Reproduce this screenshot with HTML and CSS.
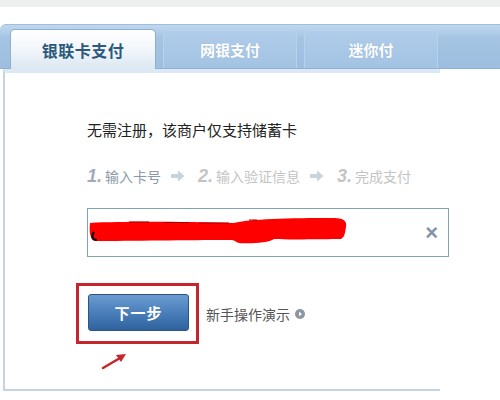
FILE: index.html
```html
<!DOCTYPE html>
<html lang="zh-CN">
<head>
<meta charset="utf-8">
<link rel="stylesheet" href="styles.css">
</head>
<body>
<div class="top-strip"></div>
<div class="page">
  <div class="tabbar">
    <div class="tab active">银联卡支付</div>
    <div class="tab">网银支付</div>
    <div class="tab">迷你付</div>
  </div>
  <div class="card">
    <p class="notice">无需注册，该商户仅支持储蓄卡</p>
    <div class="steps">
      <span class="step current"><i class="num">1.</i>输入卡号</span>
      <svg class="arrow" width="14" height="12" viewBox="0 0 14 12"><path d="M0 4h7V0.5L13.5 6 7 11.5V8H0z" fill="#c7d4e0"/></svg>
      <span class="step"><i class="num">2.</i>输入验证信息</span>
      <svg class="arrow" width="14" height="12" viewBox="0 0 14 12"><path d="M0 4h7V0.5L13.5 6 7 11.5V8H0z" fill="#c7d4e0"/></svg>
      <span class="step"><i class="num">3.</i>完成支付</span>
    </div>
    <div class="input">
      <svg class="scribble" width="262" height="30" viewBox="0 0 262 30">
        <path d="M1 6 C40 4 100 5 145 6 C160 2 200 1 245 1 C256 1 258 5 257 10 C256 15 256 20 252 22 C240 22 200 23 185 22 C180 26 160 27 150 26 C145 25 148 23 140 23 C100 23 40 24 6 24 C1 23 0 14 1 6 Z" fill="#ff0000"/>
        <path d="M40 5h20 M75 5.5h25 M110 6h30 M160 3h8" stroke="#a30000" stroke-width="1.2"/>
        <path d="M5 15 C2 19 3 23 8 23" stroke="#111" stroke-width="2.2" fill="none"/>
      </svg>
      <span class="clear">×</span>
    </div>
    <div class="actions">
      <div class="highlight">
        <button class="next">下一步</button>
        <svg class="mark" width="28" height="18" viewBox="0 0 28 18"><path d="M2 16 L19 6" stroke="#c4262c" stroke-width="2.5" stroke-linecap="round"/><path d="M15 3 L25 2 L20 10 Z" fill="#c4262c"/></svg>
      </div>
      <a class="demo">新手操作演示<svg width="10" height="10" viewBox="0 0 10 10"><circle cx="5" cy="5" r="5" fill="#8b97a3"/><path d="M4 2.8 L7 5 L4 7.2 Z" fill="#fff"/></svg></a>
    </div>
  </div>
</div>
</body>
</html>
```

FILE: styles.css
```css
* { box-sizing: border-box; }
html, body { margin: 0; padding: 0; background: #fff; }
body {
  width: 500px;
  height: 400px;
  overflow: hidden;
  font-family: "Noto Sans CJK SC", "Liberation Sans", sans-serif;
}
.top-strip { height: 7px; background: #eef0ef; }
.page { padding-top: 17px; }
.tabbar {
  height: 45px;
  display: flex;
  align-items: flex-end;
  gap: 7px;
  padding-left: 10px;
  background: linear-gradient(#c0d8ee, #a5c4e3 30%, #9dbee0);
  border-top: 1px solid #9fbfdd;
  border-bottom: 1px solid #8fb1d4;
  border-top-left-radius: 6px;
}
.tab {
  width: 134px;
  height: 38px;
  display: flex;
  align-items: center;
  justify-content: center;
  color: #fff;
  font-weight: bold;
  font-size: 15px;
  background: linear-gradient(#b0cdea, #a3c3e3);
  border: 1px solid #b8d2ec;
  border-bottom: none;
  border-radius: 5px 5px 0 0;
  text-shadow: 0 0 1px #8aaacb;
}
.tab.active {
  width: 146px;
  height: 40px;
  margin-bottom: -1px;
  color: #2b5a7c;
  font-size: 16px;
  text-shadow: none;
  background: linear-gradient(#ffffff, #f2f6fa 50%, #dbe7f2);
  border: 1px solid #8eb0cf;
  border-bottom: none;
  letter-spacing: 0.5px;
}
.card {
  width: 437px;
  height: 322px;
  margin-left: 3px;
  border-left: 2px solid #c3d4e4;
  border-bottom: 2px solid #c3d4e4;
  border-top: 4px solid #dce8f3;
  background: #fff;
  padding: 47px 0 0 82px;
}
.notice {
  margin: 0;
  font-size: 15px;
  line-height: 20px;
  color: #222;
}
.steps {
  margin-top: 26px;
  display: flex;
  align-items: center;
  height: 20px;
  font-size: 14px;
  color: #c4c4c4;
}
.step { display: inline-flex; align-items: baseline; }
.step.current { color: #8c9aa8; }
.num {
  font-family: "Liberation Sans", sans-serif;
  font-style: italic;
  font-weight: bold;
  font-size: 18px;
  margin-right: 3px;
}
.step.current .num { color: #9eadbb; }
.arrow { margin: 0 13px 0 10px; }
.input {
  margin-top: 22px;
  width: 362px;
  height: 49px;
  border: 1px solid #7fa6ae;
  display: flex;
  align-items: center;
  justify-content: space-between;
  padding: 0 10px 0 1px;
}
.scribble { display: block; margin-top: -1px; }
.clear {
  color: #8593a8;
  font-family: "Liberation Sans", sans-serif;
  font-weight: bold;
  font-size: 22px;
  line-height: 1;
}
.actions {
  margin-top: 26px;
  margin-left: -11px;
  display: flex;
  align-items: center;
}
.highlight {
  position: relative;
  border: 3px solid #c3262d;
  padding: 8px 7px 10px 9px;
}
.next {
  display: block;
  width: 101px;
  height: 37px;
  border: 1px solid #2b5584;
  border-radius: 3px;
  background: linear-gradient(#6c9bd0, #4a7fbb 50%, #2f629d);
  color: #fff;
  font-family: "Noto Sans CJK SC", sans-serif;
  font-weight: bold;
  font-size: 15px;
  letter-spacing: 1px;
}
.mark {
  position: absolute;
  left: 22px;
  top: 66px;
}
.demo {
  margin-left: 7px;
  font-size: 14px;
  color: #555;
  display: inline-flex;
  align-items: center;
  gap: 5px;
}
```
